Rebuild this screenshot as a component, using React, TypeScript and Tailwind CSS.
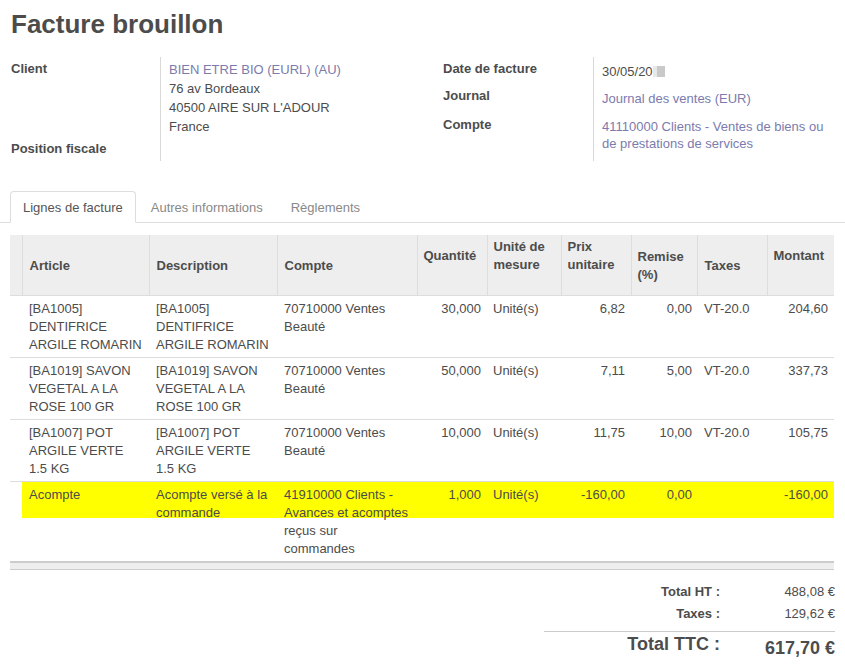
const lines = [
  {
    article: '[BA1005]\nDENTIFRICE\nARGILE ROMARIN',
    desc: '[BA1005]\nDENTIFRICE\nARGILE ROMARIN',
    compte: '70710000 Ventes\nBeauté',
    qty: '30,000', uom: 'Unité(s)', pu: '6,82', remise: '0,00', taxes: 'VT-20.0', montant: '204,60',
  },
  {
    article: '[BA1019] SAVON\nVEGETAL A LA\nROSE 100 GR',
    desc: '[BA1019] SAVON\nVEGETAL A LA\nROSE 100 GR',
    compte: '70710000 Ventes\nBeauté',
    qty: '50,000', uom: 'Unité(s)', pu: '7,11', remise: '5,00', taxes: 'VT-20.0', montant: '337,73',
  },
  {
    article: '[BA1007] POT\nARGILE VERTE\n1.5 KG',
    desc: '[BA1007] POT\nARGILE VERTE\n1.5 KG',
    compte: '70710000 Ventes\nBeauté',
    qty: '10,000', uom: 'Unité(s)', pu: '11,75', remise: '10,00', taxes: 'VT-20.0', montant: '105,75',
  },
  {
    article: 'Acompte',
    desc: 'Acompte versé à la\ncommande',
    compte: '41910000 Clients -\nAvances et acomptes\nreçus sur\ncommandes',
    qty: '1,000', uom: 'Unité(s)', pu: '-160,00', remise: '0,00', taxes: '', montant: '-160,00',
    highlight: true,
  },
];

export default function App() {
  return (
    <div className="w-[845px] h-[666px] overflow-hidden bg-white text-[13px] text-[#4c4c4c] font-['Liberation_Sans',Arial,sans-serif]">
      {/* Title */}
      <h1 className="pl-[11px] pt-[9px] text-[26px] leading-[30px] font-bold">Facture brouillon</h1>

      {/* Header fields */}
      <div className="mt-[18px] flex">
        <div className="w-[443px] pl-[11px] grid grid-cols-[149px_1fr]">
          <div className="pt-[2px] leading-[19px] font-bold">Client</div>
          <div className="border-l border-[#d9d9d9] pl-2 pt-[3px] leading-[19px]">
            <div className="text-[#7c7bad]">BIEN ETRE BIO (EURL) (AU)</div>
            <div>76 av Bordeaux</div>
            <div>40500 AIRE SUR L'ADOUR</div>
            <div>France</div>
          </div>
          <div className="pt-[3px] leading-[19px] font-bold">Position fiscale</div>
          <div className="border-l border-[#d9d9d9] pt-[3px] pb-[3px] h-[25px]" />
        </div>

        <div className="grid grid-cols-[150px_1fr] w-[250px]">
          <div className="pt-[3px] leading-[18px] font-bold">Date de facture</div>
          <div className="border-l border-[#d9d9d9] pl-2 pt-[5px] pb-[4px] leading-[18px] flex items-center">
            <span>30/05/20</span>
            <span className="flex h-[11px] mb-[2px]">
              <span className="w-[4px] bg-[#e8e8e8]" />
              <span className="w-[8px] bg-[#c9c9c9]" />
            </span>
          </div>
          <div className="pt-[1px] leading-[18px] font-bold">Journal</div>
          <div className="border-l border-[#d9d9d9] pl-2 pt-[4px] pb-[5px] leading-[18px] text-[#7c7bad]">Journal des ventes (EUR)</div>
          <div className="leading-[18px] font-bold">Compte</div>
          <div className="border-l border-[#d9d9d9] pl-2 pt-[2px] pb-[7px] leading-[17px] text-[#7c7bad] w-[240px]">
            41110000 Clients - Ventes de biens ou de prestations de services
          </div>
        </div>
      </div>

      {/* Tabs */}
      <div className="mt-[30px] flex pl-[10px] border-b border-[#ddd]">
        <div className="-mb-px mr-[2px] border border-[#ddd] border-b-white rounded-t-[4px] bg-white px-[12px] pt-[7px] pb-[5px] leading-[18px] text-[#555]">
          Lignes de facture
        </div>
        <div className="-mb-px mr-[2px] border border-transparent px-[12px] pt-[7px] pb-[5px] leading-[18px] text-[#888]">
          Autres informations
        </div>
        <div className="-mb-px mr-[2px] border border-transparent px-[12px] pt-[7px] pb-[5px] leading-[18px] text-[#888]">
          Règlements
        </div>
      </div>

      {/* Lines */}
      <div className="mt-[12px] px-[10px]">
        <table className="w-[824px] table-fixed border-collapse">
          <colgroup>
            <col className="w-[12px]" />
            <col className="w-[127px]" />
            <col className="w-[128px]" />
            <col className="w-[140px]" />
            <col className="w-[70px]" />
            <col className="w-[74px]" />
            <col className="w-[70px]" />
            <col className="w-[66px]" />
            <col className="w-[70px]" />
            <col className="w-[67px]" />
          </colgroup>
          <thead>
            <tr className="h-[60px] bg-[#eee] border-b border-[#ddd] leading-[18px]">
              <th className="p-0" />
              <th className="border-l border-[#ddd] px-[7px] pt-[2px] text-left align-middle font-bold">Article</th>
              <th className="border-l border-[#ddd] px-[7px] pt-[2px] text-left align-middle font-bold">Description</th>
              <th className="border-l border-[#ddd] px-[7px] pt-[2px] text-left align-middle font-bold">Compte</th>
              <th className="border-l border-[#ddd] px-[6px] pb-[18px] text-left align-middle font-bold">Quantité</th>
              <th className="border-l border-[#ddd] px-[6px] pb-[18px] text-left align-middle font-bold">Unité de mesure</th>
              <th className="border-l border-[#ddd] px-[6px] pb-[18px] text-left align-middle font-bold">Prix unitaire</th>
              <th className="border-l border-[#ddd] px-[6px] pt-[2px] text-left align-middle font-bold">Remise (%)</th>
              <th className="border-l border-[#ddd] px-[7px] pt-[2px] text-left align-middle font-bold">Taxes</th>
              <th className="border-l border-[#ddd] px-[6px] pb-[18px] text-left align-middle font-bold">Montant</th>
            </tr>
          </thead>
          <tbody className="leading-[18px]">
            {lines.map((l, i) => {
              const hl = l.highlight
                ? 'bg-no-repeat bg-[linear-gradient(to_bottom,#ffff00_0,#ffff00_36px,transparent_36px)]'
                : '';
              return (
                <tr key={i} className={l.highlight ? '' : 'border-b border-[#ddd]'}>
                  <td className="p-0" />
                  <td className={`${hl} pl-[7px] pr-[4px] pt-[4px] pb-[3px] align-top whitespace-pre-line`}>{l.article}</td>
                  <td className={`${hl} pl-[7px] pr-[4px] pt-[4px] pb-[3px] align-top whitespace-pre-line`}>{l.desc}</td>
                  <td className={`${hl} pl-[7px] pr-[4px] pt-[4px] pb-[3px] align-top whitespace-pre-line`}>{l.compte}</td>
                  <td className={`${hl} px-[6px] pt-[4px] pb-[3px] align-top text-right`}>{l.qty}</td>
                  <td className={`${hl} px-[6px] pt-[4px] pb-[3px] align-top`}>{l.uom}</td>
                  <td className={`${hl} px-[6px] pt-[4px] pb-[3px] align-top text-right`}>{l.pu}</td>
                  <td className={`${hl} px-[5px] pt-[4px] pb-[3px] align-top text-right`}>{l.remise}</td>
                  <td className={`${hl} px-[7px] pt-[4px] pb-[3px] align-top`}>{l.taxes}</td>
                  <td className={`${hl} px-[6px] pt-[4px] pb-[3px] align-top text-right`}>{l.montant}</td>
                </tr>
              );
            })}
          </tbody>
          <tfoot>
            <tr>
              <td colSpan={10} className="h-[8px] p-0 bg-[#eee] border-t-2 border-b border-[#ccc]" />
            </tr>
          </tfoot>
        </table>
      </div>

      {/* Totals */}
      <div className="flex justify-end pr-[10px] mt-[11px]">
        <div className="w-[291px]">
          <div className="grid grid-cols-[1fr_115px] leading-[18px] py-[2px]">
            <div className="text-right font-bold">Total HT :</div>
            <div className="text-right">488,08 €</div>
          </div>
          <div className="grid grid-cols-[1fr_115px] leading-[18px] py-[2px]">
            <div className="text-right font-bold">Taxes :</div>
            <div className="text-right">129,62 €</div>
          </div>
          <div className="mt-[6px] border-t border-[#ccc] grid grid-cols-[1fr_115px] text-[18px] leading-[22px] font-bold">
            <div className="text-right pt-[1px]">Total TTC :</div>
            <div className="text-right pt-[5px]">617,70 €</div>
          </div>
        </div>
      </div>
    </div>
  );
}
